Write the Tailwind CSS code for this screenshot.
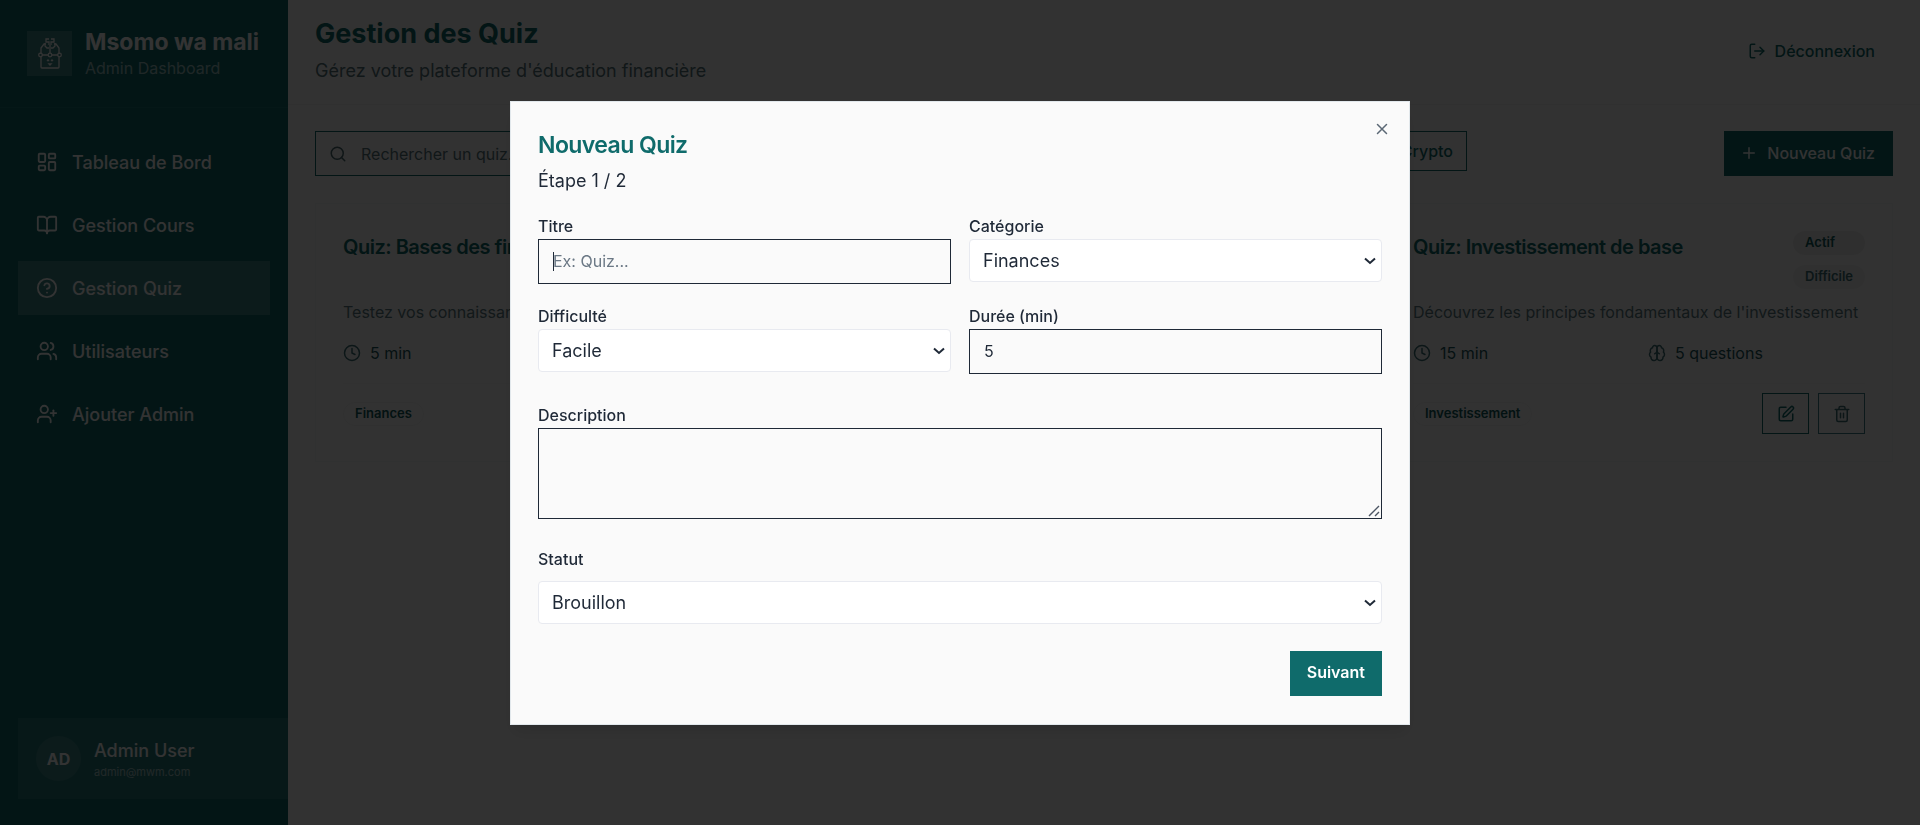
<!DOCTYPE html>
<html lang="fr">
<head>
<meta charset="utf-8">
<meta name="viewport" content="width=device-width, initial-scale=1">
<title>Gestion des Quiz</title>
<script src="https://cdn.jsdelivr.net/npm/@tailwindcss/browser@4"></script>
</head>
<body class="bg-[#fafafa] font-['Inter',sans-serif] text-[#1f2937]">
<div class="flex min-h-screen">
  <aside class="flex w-[288px] shrink-0 flex-col bg-[#0f6b6b] text-white">
    <div class="flex h-[108px] items-center gap-[13px] border-b border-white/5 px-[27px]">
      <div class="flex size-[45px] items-center justify-center bg-white/20">
        <svg class="size-[36px]" viewBox="0 0 36 36" fill="none" stroke="currentColor" stroke-width="1.3" aria-hidden="true">
          <path d="M9 18V12l3-4h2M27 18V12l-3-4h-2M9 20v11q0 1 1 1h16q1 0 1-1V20M10 19h6M20 19h6M18 17V9"/>
          <circle cx="8.500" cy="19" r="1.800"/><circle cx="18" cy="19" r="1.800"/><circle cx="27.500" cy="19" r="1.800"/>
          <path d="M17 3h-3v3h3v3M19 3h3v3h-3v3M13 7v3l2 2h2M23 7v3l-2 2h-2"/>
          <path d="M15 25l1-1 1 1M19 25l1-1 1 1M17 28h2l-1 1z"/>
        </svg>
      </div>
      <div class="pt-[2px]">
        <p class="text-[23px] leading-[27px] font-bold">Msomo wa mali</p>
        <p class="text-[16px] leading-[24px] text-white/60">Admin Dashboard</p>
      </div>
    </div>
    <nav class="flex flex-col gap-[9px] px-[18px] pt-[27px] text-[18px] font-medium">
      <a href="#" class="flex h-[54px] items-center gap-[14px] px-[18px]">
        <svg class="size-[22px]" viewBox="0 0 24 24" fill="none" stroke="currentColor" stroke-width="2" stroke-linecap="round" stroke-linejoin="round" aria-hidden="true"><rect width="7" height="9" x="3" y="3" rx="1"/><rect width="7" height="5" x="14" y="3" rx="1"/><rect width="7" height="9" x="14" y="12" rx="1"/><rect width="7" height="5" x="3" y="16" rx="1"/></svg>Tableau de Bord</a>
      <a href="#" class="flex h-[54px] items-center gap-[14px] px-[18px]">
        <svg class="size-[22px]" viewBox="0 0 24 24" fill="none" stroke="currentColor" stroke-width="2" stroke-linecap="round" stroke-linejoin="round" aria-hidden="true"><path d="M12 7v14"/><path d="M3 18a1 1 0 0 1-1-1V4a1 1 0 0 1 1-1h5a4 4 0 0 1 4 4 4 4 0 0 1 4-4h5a1 1 0 0 1 1 1v13a1 1 0 0 1-1 1h-6a3 3 0 0 0-3 3 3 3 0 0 0-3-3z"/></svg>Gestion Cours</a>
      <a href="#" aria-current="page" class="flex h-[54px] items-center gap-[14px] bg-white/20 px-[18px]">
        <svg class="size-[22px]" viewBox="0 0 24 24" fill="none" stroke="currentColor" stroke-width="2" stroke-linecap="round" stroke-linejoin="round" aria-hidden="true"><circle cx="12" cy="12" r="10"/><path d="M9.090 9a3 3 0 0 1 5.830 1c0 2-3 3-3 3"/><path d="M12 17h.01"/></svg>Gestion Quiz</a>
      <a href="#" class="flex h-[54px] items-center gap-[14px] px-[18px]">
        <svg class="size-[22px]" viewBox="0 0 24 24" fill="none" stroke="currentColor" stroke-width="2" stroke-linecap="round" stroke-linejoin="round" aria-hidden="true"><path d="M16 21v-2a4 4 0 0 0-4-4H6a4 4 0 0 0-4 4v2"/><circle cx="9" cy="7" r="4"/><path d="M22 21v-2a4 4 0 0 0-3-3.870"/><path d="M16 3.130a4 4 0 0 1 0 7.750"/></svg>Utilisateurs</a>
      <a href="#" class="flex h-[54px] items-center gap-[14px] px-[18px]">
        <svg class="size-[22px]" viewBox="0 0 24 24" fill="none" stroke="currentColor" stroke-width="2" stroke-linecap="round" stroke-linejoin="round" aria-hidden="true"><path d="M16 21v-2a4 4 0 0 0-4-4H6a4 4 0 0 0-4 4v2"/><circle cx="9" cy="7" r="4"/><line x1="19" x2="19" y1="8" y2="14"/><line x1="22" x2="16" y1="11" y2="11"/></svg>Ajouter Admin</a>
    </nav>
    <div class="mt-auto mb-[26px] ml-[18px] flex items-center gap-[13px] bg-white/10 p-[18px]">
      <div class="flex size-[45px] items-center justify-center rounded-full bg-white/10 text-[16px] font-bold">AD</div>
      <div class="pt-[2px]">
        <p class="text-[18px] leading-[25px] font-medium">Admin User</p>
        <p class="text-[11px] leading-[18px] text-white/60">admin@mwm.com</p>
      </div>
    </div>
  </aside>

  <div class="min-w-0 flex-1">
    <header class="flex h-[105px] items-center justify-between border-b border-[#eef0f0] px-[27px] pb-[2px]">
      <div>
        <h1 class="text-[27px] leading-[34px] font-bold text-[#0f6b6b]">Gestion des Quiz</h1>
        <p class="mt-[6px] text-[18px] leading-[28px] text-[#56747a]">Gérez votre plateforme d'éducation financière</p>
      </div>
      <button type="button" class="flex h-[40px] items-center gap-[9px] px-[18px] text-[16px] font-medium text-[#0f6b6b]">
        <svg class="size-[18px]" viewBox="0 0 24 24" fill="none" stroke="currentColor" stroke-width="2" stroke-linecap="round" stroke-linejoin="round" aria-hidden="true"><path d="M9 21H5a2 2 0 0 1-2-2V5a2 2 0 0 1 2-2h4"/><polyline points="16 17 21 12 16 7"/><line x1="21" x2="9" y1="12" y2="12"/></svg>Déconnexion</button>
    </header>

    <main class="flex flex-col gap-[27px] px-[27px] pt-[26px]">
      <div class="flex items-start justify-between">
        <div class="flex w-[1152px] items-start justify-between">
          <label class="flex h-[45px] w-[432px] items-center gap-[14px] border border-[#0f6b6b] px-[13px] text-[#4a6b70]">
            <svg class="size-[18px]" viewBox="0 0 24 24" fill="none" stroke="currentColor" stroke-width="2" stroke-linecap="round" stroke-linejoin="round" aria-hidden="true"><circle cx="11" cy="11" r="8"/><path d="m21 21-4.300-4.300"/></svg>
            <input type="search" aria-label="Rechercher un quiz" placeholder="Rechercher un quiz..." class="min-w-0 flex-1 text-[16px] outline-none placeholder:text-[#56747a]">
          </label>
          <button type="button" class="h-[40px] border border-[#0f6b6b] px-[13px] text-[16px] font-medium text-[#0f6b6b]">Crypto</button>
        </div>
        <button type="button" class="flex h-[45px] items-center gap-[9px] bg-[#0f6b6b] pr-[18px] pb-[2px] pl-[16px] text-[16px] font-medium text-white">
          <svg class="size-[18px]" viewBox="0 0 24 24" fill="none" stroke="currentColor" stroke-width="2" stroke-linecap="round" aria-hidden="true"><path d="M5 12h14M12 5v14"/></svg>Nouveau Quiz</button>
      </div>

      <div class="grid grid-cols-3 gap-[27px]">
        <article class="border border-[#f0f2f2] p-[27px] text-[16px]">
          <div class="flex h-[58px] items-start justify-between">
            <h2 class="text-[20px] leading-[32px] font-semibold tracking-tight text-[#0f6b6b]">Quiz: Bases des finances</h2>
          </div>
          <p class="mt-[11px] leading-[24px] text-[#5d7a80]">Testez vos connaissances</p>
          <div class="mt-[17px] grid grid-cols-2 gap-[18px] leading-[24px] text-[#1a565a]">
            <div class="flex items-center gap-[9px]">
              <svg class="size-[18px] text-[#3c6f75]" viewBox="0 0 24 24" fill="none" stroke="currentColor" stroke-width="2" stroke-linecap="round" stroke-linejoin="round" aria-hidden="true"><circle cx="12" cy="12" r="10"/><path d="M12 6v6l4 2"/></svg>5 min</div>
          </div>
          <div class="mt-[18px] flex h-[51px] items-end border-t border-[#f3f5f5]">
            <span class="mb-[8px] flex h-[24px] items-center rounded-full border border-[#eff1f1] px-[11px] text-[13px] font-semibold text-[#0f5b5b]">Finances</span>
          </div>
        </article>

        <article class="col-start-3 border border-[#f0f2f2] p-[27px] text-[16px]">
          <div class="flex h-[58px] items-start justify-between">
            <h2 class="text-[20px] leading-[32px] font-semibold tracking-tight text-[#0f6b6b]">Quiz: Investissement de base</h2>
            <div class="flex flex-col gap-[10px] text-[13px] font-semibold text-[#0f5b5b]">
              <span class="flex h-[24px] items-center rounded-full bg-[#ebebeb] px-[12px]">Actif</span>
              <span class="flex h-[24px] items-center rounded-full bg-[#eff1f1] px-[12px] text-[#3c6f75]">Difficile</span>
            </div>
          </div>
          <p class="mt-[11px] leading-[24px] text-[#5d7a80]">Découvrez les principes fondamentaux de l'investissement</p>
          <div class="mt-[17px] grid grid-cols-2 gap-[18px] leading-[24px] text-[#1a565a]">
            <div class="flex items-center gap-[9px]">
              <svg class="size-[18px] text-[#3c6f75]" viewBox="0 0 24 24" fill="none" stroke="currentColor" stroke-width="2" stroke-linecap="round" stroke-linejoin="round" aria-hidden="true"><circle cx="12" cy="12" r="10"/><path d="M12 6v6l4 2"/></svg>15 min</div>
            <div class="flex items-center gap-[9px]">
              <svg class="size-[18px] text-[#3c6f75]" viewBox="0 0 24 24" fill="none" stroke="currentColor" stroke-width="2" stroke-linecap="round" stroke-linejoin="round" aria-hidden="true"><path d="M12 5a3 3 0 1 0-5.997.125 4 4 0 0 0-2.526 5.770 4 4 0 0 0 .556 6.588A4 4 0 1 0 12 18Z"/><path d="M12 5a3 3 0 1 1 5.997.125 4 4 0 0 1 2.526 5.770 4 4 0 0 1-.556 6.588A4 4 0 1 1 12 18Z"/><path d="M15 13a4.500 4.500 0 0 1-3-4 4.500 4.500 0 0 1-3 4"/></svg>5 questions</div>
          </div>
          <div class="mt-[18px] flex h-[51px] items-end justify-between border-t border-[#f3f5f5]">
            <span class="mb-[8px] flex h-[24px] items-center rounded-full border border-[#eff1f1] px-[11px] text-[13px] font-semibold text-[#0f5b5b]">Investissement</span>
            <div class="flex gap-[9px]">
              <button type="button" aria-label="Modifier" class="flex h-[41px] w-[47px] items-center justify-center border border-[#0f6b6b] text-[#0f6b6b]">
                <svg class="size-[18px]" viewBox="0 0 24 24" fill="none" stroke="currentColor" stroke-width="2" stroke-linecap="round" stroke-linejoin="round" aria-hidden="true"><path d="M12 3H5a2 2 0 0 0-2 2v14a2 2 0 0 0 2 2h14a2 2 0 0 0 2-2v-7"/><path d="M18.375 2.625a1 1 0 0 1 3 3l-9.013 9.014a2 2 0 0 1-.853.505l-2.873.840a.5.5 0 0 1-.620-.620l.840-2.873a2 2 0 0 1 .506-.852z"/></svg></button>
              <button type="button" aria-label="Supprimer" class="flex h-[41px] w-[47px] items-center justify-center border border-[#3c7f85] text-[#3c6f75]">
                <svg class="size-[18px]" viewBox="0 0 24 24" fill="none" stroke="currentColor" stroke-width="2" stroke-linecap="round" stroke-linejoin="round" aria-hidden="true"><path d="M3 6h18M19 6v14c0 1-1 2-2 2H7c-1 0-2-1-2-2V6M8 6V4c0-1 1-2 2-2h4c1 0 2 1 2 2v2M10 11v6M14 11v6"/></svg></button>
            </div>
          </div>
        </article>
      </div>
    </main>
  </div>
</div>

<div class="fixed inset-0 flex items-center justify-center bg-black/80">
  <div role="dialog" aria-modal="true" aria-labelledby="dialog-title" class="relative w-[900px] border border-[#e2e8ec] bg-[#fafafa] px-[27px] pt-[27px] pb-[28px] shadow-lg">
    <button type="button" aria-label="Fermer" class="absolute top-[18px] right-[18px] text-[#5b6875]">
      <svg class="size-[18px]" viewBox="0 0 24 24" fill="none" stroke="currentColor" stroke-width="2" stroke-linecap="round" aria-hidden="true"><path d="M18 6 6 18M6 6l12 12"/></svg></button>
    <h2 id="dialog-title" class="text-[23px] leading-[32px] font-semibold tracking-tight text-[#0f6b6b]">Nouveau Quiz</h2>
    <p class="mt-[6px] text-[18px] leading-[27px]">Étape 1 / 2</p>
    <form class="mt-[22px]">
      <div class="grid grid-cols-2 gap-x-[18px] gap-y-[22px]">
        <div class="relative flex flex-col gap-[3px]">
          <label for="titre" class="text-[16px] leading-[20px] font-medium">Titre</label>
          <input id="titre" type="text" placeholder="Ex: Quiz..." class="h-[45px] border border-[#1f2937] px-[14px] text-[16px] outline-none placeholder:text-[#6b7885]">
          <span class="absolute bottom-[13px] left-[15px] h-[19px] w-px bg-[#1f2937]"></span>
        </div>
        <div class="flex flex-col gap-[3px]">
          <label for="categorie" class="text-[16px] leading-[20px] font-medium">Catégorie</label>
          <div class="relative">
            <select id="categorie" class="block h-[43px] w-full appearance-none rounded-[4px] border border-[#e8eaf0] bg-white px-[13px] text-[18px]"><option>Finances</option></select>
            <svg class="pointer-events-none absolute top-[18px] right-[6px] h-[8px] w-[12px]" viewBox="0 0 12 8" fill="none" stroke="currentColor" stroke-width="2" aria-hidden="true"><path d="M1 1.500l5 4.500 5-4.500"/></svg>
          </div>
        </div>
        <div class="flex flex-col gap-[3px]">
          <label for="difficulte" class="text-[16px] leading-[20px] font-medium">Difficulté</label>
          <div class="relative">
            <select id="difficulte" class="block h-[43px] w-full appearance-none rounded-[4px] border border-[#e8eaf0] bg-white px-[13px] text-[18px]"><option>Facile</option></select>
            <svg class="pointer-events-none absolute top-[18px] right-[6px] h-[8px] w-[12px]" viewBox="0 0 12 8" fill="none" stroke="currentColor" stroke-width="2" aria-hidden="true"><path d="M1 1.500l5 4.500 5-4.500"/></svg>
          </div>
        </div>
        <div class="flex flex-col gap-[3px]">
          <label for="duree" class="text-[16px] leading-[20px] font-medium">Durée (min)</label>
          <input id="duree" type="number" value="5" class="h-[45px] border border-[#1f2937] px-[14px] text-[16px] outline-none">
        </div>
      </div>
      <div class="relative mt-[31px] flex flex-col gap-[3px]">
        <label for="description" class="text-[16px] leading-[20px] font-medium">Description</label>
        <textarea id="description" class="h-[91px] resize-none border border-[#1f2937] px-[14px] py-[9px] text-[16px] outline-none"></textarea>
        <svg class="pointer-events-none absolute right-[2px] bottom-[2px] size-[12px]" viewBox="0 0 12 12" fill="none" stroke="#4b5563" stroke-width="1.4" aria-hidden="true"><path d="M1 11L11 1M7 11l4-4"/></svg>
      </div>
      <div class="mt-[30px] flex flex-col gap-[12px]">
        <label for="statut" class="text-[16px] leading-[20px] font-medium">Statut</label>
        <div class="relative">
          <select id="statut" class="block h-[43px] w-full appearance-none rounded-[4px] border border-[#e8eaf0] bg-white px-[13px] text-[18px]"><option>Brouillon</option></select>
          <svg class="pointer-events-none absolute top-[18px] right-[6px] h-[8px] w-[12px]" viewBox="0 0 12 8" fill="none" stroke="currentColor" stroke-width="2" aria-hidden="true"><path d="M1 1.500l5 4.500 5-4.500"/></svg>
        </div>
      </div>
      <div class="mt-[27px] flex justify-end">
        <button type="submit" class="h-[45px] bg-[#0f6b6b] px-[17px] pb-[2px] text-[16px] font-semibold text-white">Suivant</button>
      </div>
    </form>
  </div>
</div>
</body>
</html>
